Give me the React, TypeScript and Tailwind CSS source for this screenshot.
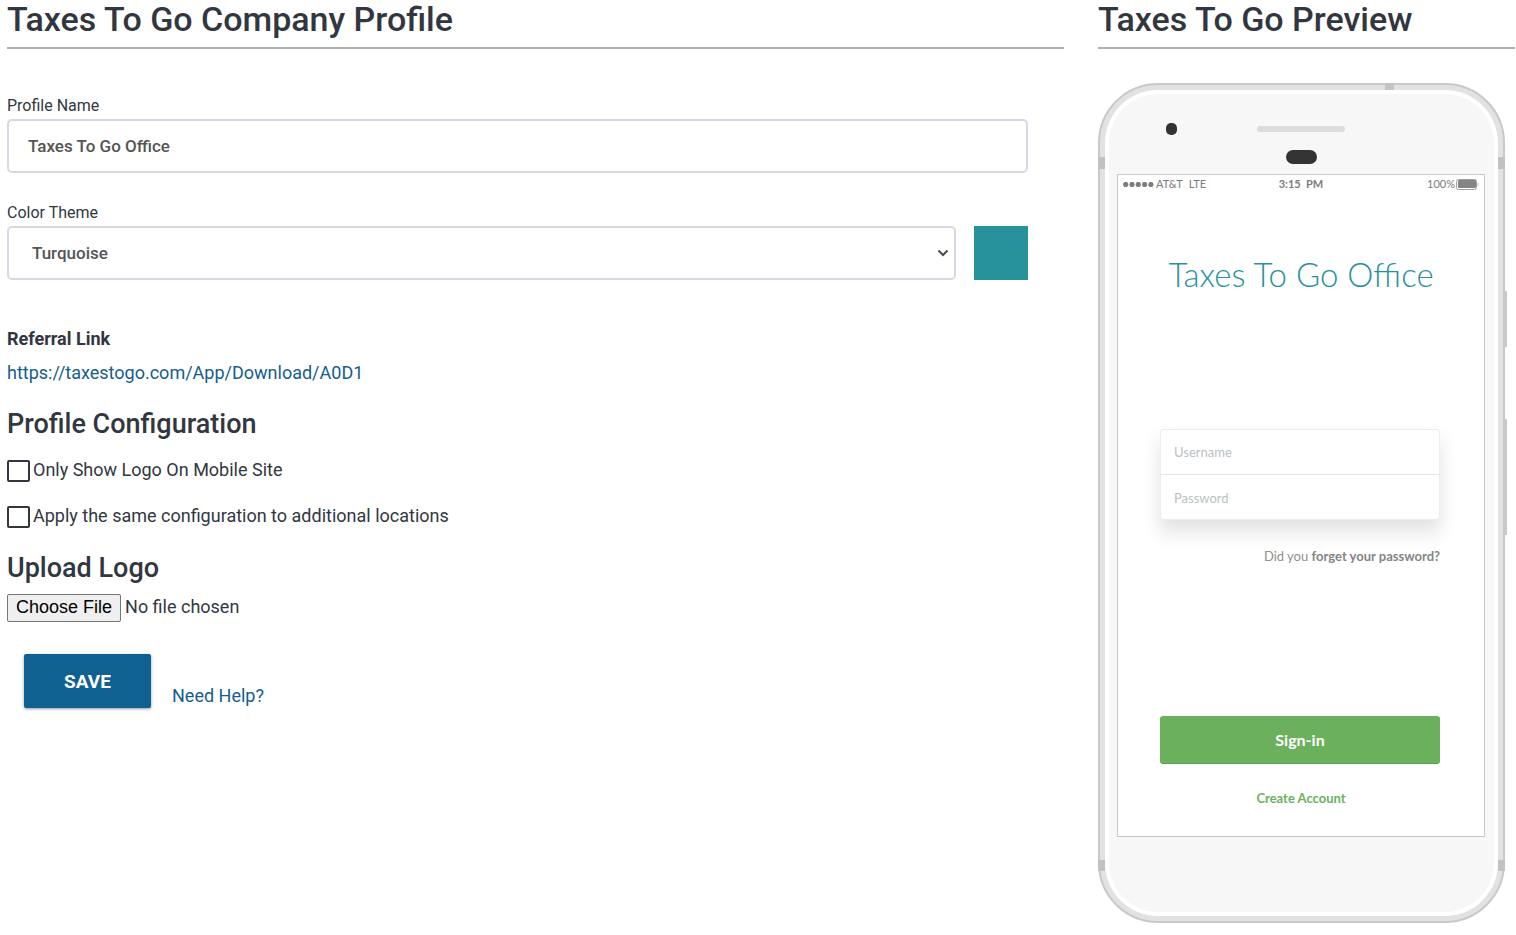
import { useState } from 'react';

const THEMES = [
  { name: 'Turquoise', swatch: '#27929b' },
  { name: 'Navy', swatch: '#1f3a68' },
  { name: 'Green', swatch: '#6bb15d' },
  { name: 'Orange', swatch: '#e58a2c' },
];

const OPTIONS = [
  { id: 'only-logo', label: 'Only Show Logo On Mobile Site' },
  { id: 'apply-all', label: 'Apply the same configuration to additional locations' },
];

const heading = 'border-b-2 border-[#b0b0b0] pb-[9px] text-[34px] leading-[38px] font-medium';
const field =
  'h-[54px] rounded-[5px] border-2 border-[#d5d8e6] bg-white text-[17px] font-medium text-[#555] outline-none';

function StatusBar() {
  return (
    <div className="flex h-[18px] items-center justify-between pr-[5px] pl-[5px] text-[11px] text-[#7b7b7b]">
      <span className="flex flex-1 items-center gap-0.5">
        <svg className="h-[5px] w-[31px]" viewBox="0 0 31 5" fill="#7d7d7d" aria-hidden="true">
          {[0, 1, 2, 3, 4].map((dot) => (
            <circle key={dot} cx={2.7 + dot * 6.3} cy="2.5" r="2.6" />
          ))}
        </svg>
        <span>AT&amp;T</span>
        <span className="ml-1">LTE</span>
      </span>
      <span className="font-bold">3:15&nbsp; PM</span>
      <span className="flex flex-1 items-center justify-end gap-px">
        100%
        <svg className="h-[11px] w-[23px]" viewBox="0 0 23 11" aria-hidden="true">
          <rect x="0.5" y="0.5" width="20" height="10" rx="2" fill="#fff" stroke="#a0a0a0" />
          <rect x="2" y="1" width="18" height="8" rx="1" fill="#848484" />
          <path d="M22 4v3" stroke="#b5b5b5" />
        </svg>
      </span>
    </div>
  );
}

function PhonePreview({ title, color }: { title: string; color: string }) {
  return (
    <div className="relative mt-[34px] w-[407px] rounded-[60px] border-2 border-[#c8c9cb] bg-[#e1e2e4] p-[5px]">
      {/* Antenna bands */}
      <span className="absolute -top-0.5 left-[285px] h-[7px] w-[9px] bg-[#c4c4c6]" />
      <span className="absolute top-[72px] -left-0.5 h-3 w-[7px] bg-[#c0c1c2]" />
      <span className="absolute top-[72px] -right-0.5 h-3 w-[7px] bg-[#c0c1c2]" />
      <span className="absolute bottom-[50px] -left-0.5 h-[11px] w-[7px] bg-[#c0c1c2]" />
      <span className="absolute -right-0.5 bottom-[50px] h-[11px] w-[7px] bg-[#c0c1c2]" />
      {/* Side buttons */}
      <span className="absolute top-[206px] -right-1 h-14 w-0.5 bg-[#c8c9cb]" />
      <span className="absolute top-[334px] -right-1 h-[116px] w-0.5 bg-[#c8c9cb]" />

      <div className="rounded-[53px] bg-white p-1">
        <div className="rounded-[49px] bg-[#f7f7f7] pr-[9px] pb-[75px] pl-2">
          <div className="flex h-20 flex-col items-center">
            <div className="flex h-[42px] w-full items-center gap-20 pt-7 pl-[49px]">
              <span className="h-3 w-[11px] rounded-[5px] bg-[#333]" />
              <span className="h-1.5 w-[88px] rounded-full bg-[#dcdcdc]" />
            </div>
            <span className="mt-3.5 h-3.5 w-[31px] rounded-[7px] bg-[#333]" />
          </div>
          <div className="flex flex-col border border-[#c9c9c9] bg-white font-[Lato,sans-serif]">
            <StatusBar />
            <p
              className="mt-[61px] h-10 text-center text-[33px] leading-10 font-light"
              style={{ color }}
            >
              {title}
            </p>
            <div className="mr-11 ml-[42px] mt-[135px] rounded-[3px] border border-[#e9edef] bg-white shadow-[0_12px_20px_rgba(0,0,0,0.12)]">
              <input
                aria-label="Username"
                placeholder="Username"
                className="block h-[45px] w-full border-b border-[#e3e7e9] px-[13px] text-[13px] outline-none placeholder:text-[#b9c1c4]"
              />
              <input
                type="password"
                aria-label="Password"
                placeholder="Password"
                className="block h-[44px] w-full px-[13px] pt-0.5 text-[13px] outline-none placeholder:text-[#b9c1c4]"
              />
            </div>
            <p className="mr-11 ml-[42px] mt-[26px] text-right text-[13px] leading-5 text-[#8f8f8f]">
              Did you{' '}
              <a href="#forgot" className="font-bold text-[#858585]">
                forget your password?
              </a>
            </p>
            <button
              type="button"
              className="mr-11 ml-[42px] mt-[150px] h-12 rounded-[3px] border-b border-[#5aa54c] bg-[#6bb15d] text-base font-bold text-white"
            >
              Sign-in
            </button>
            <a
              href="#create"
              className="mt-6 mb-7 self-center text-[13px] leading-5 font-bold text-[#6bb15d]"
            >
              Create Account
            </a>
          </div>
        </div>
      </div>
    </div>
  );
}

export default function App() {
  const [name, setName] = useState('Taxes To Go Office');
  const [theme, setTheme] = useState(THEMES[0].name);
  const color = THEMES.find((t) => t.name === theme)?.swatch ?? THEMES[0].swatch;

  return (
    <main className="grid grid-cols-[minmax(0,1fr)_417px] gap-[34px] pr-px pl-[7px] font-[Roboto,sans-serif] text-lg leading-6 text-[#32373f]">
      <section>
        <h1 className={heading}>Taxes To Go Company Profile</h1>

        <form className="pr-9" onSubmit={(e) => e.preventDefault()}>
          <label htmlFor="profile-name" className="mt-[45px] mb-px block text-base">
            Profile Name
          </label>
          <input
            id="profile-name"
            value={name}
            onChange={(e) => setName(e.target.value)}
            className={`${field} block w-full px-[19px]`}
          />

          <label htmlFor="color-theme" className="mt-7 mb-px block text-base">
            Color Theme
          </label>
          <div className="flex gap-[18px]">
            <div className="relative flex-1">
              <select
                id="color-theme"
                value={theme}
                onChange={(e) => setTheme(e.target.value)}
                className={`${field} block w-full appearance-none px-[23px]`}
              >
                {THEMES.map((t) => (
                  <option key={t.name}>{t.name}</option>
                ))}
              </select>
              <svg
                className="pointer-events-none absolute top-[23px] right-[7px] h-2 w-3"
                viewBox="0 0 12 8"
                fill="none"
                stroke="#4a4a4a"
                strokeWidth="2"
                aria-hidden="true"
              >
                <path d="M1.5 1.5 6 6l4.5-4.5" />
              </svg>
            </div>
            <div className="size-[54px]" style={{ backgroundColor: color }} />
          </div>

          <p className="mt-[47px] font-bold">Referral Link</p>
          <a href="#referral" className="mt-2.5 block text-[#155d8f]">
            https://taxestogo.com/App/Download/A0D1
          </a>

          <h2 className="mt-[22px] text-[27px] leading-[34px] font-medium">Profile Configuration</h2>
          <div className="mt-[17px] flex flex-col gap-[22px]">
            {OPTIONS.map((option) => (
              <label key={option.id} htmlFor={option.id} className="flex gap-[3px]">
                <input
                  id={option.id}
                  type="checkbox"
                  className="mt-0.5 h-[22px] w-[23px] appearance-none rounded-[2px] border-2 border-[#32373f] checked:bg-[#0e6191]"
                />
                {option.label}
              </label>
            ))}
          </div>

          <h2 className="mt-[23px] text-[27px] leading-[34px] font-medium">Upload Logo</h2>
          <input
            type="file"
            aria-label="Upload Logo"
            className="mt-[9px] block h-7 file:h-7 file:rounded-[2px] file:border file:border-solid file:border-[#767676] file:bg-[#efefef] file:px-2 file:pb-0.5 file:font-['Liberation_Sans',sans-serif] file:text-black"
          />

          <div className="mt-8 ml-[17px] flex items-end gap-[21px]">
            <button
              type="submit"
              className="h-[54px] w-[127px] rounded-[2px] bg-[#0e6191] pt-0.5 text-[19px] font-bold text-white shadow-[0_1px_3px_rgba(0,0,0,0.4)]"
            >
              SAVE
            </button>
            <a href="#help" className="text-[#155d8f]">
              Need Help?
            </a>
          </div>
        </form>
      </section>

      <section>
        <h1 className={heading}>Taxes To Go Preview</h1>
        <PhonePreview title={name} color={color} />
      </section>
    </main>
  );
}
